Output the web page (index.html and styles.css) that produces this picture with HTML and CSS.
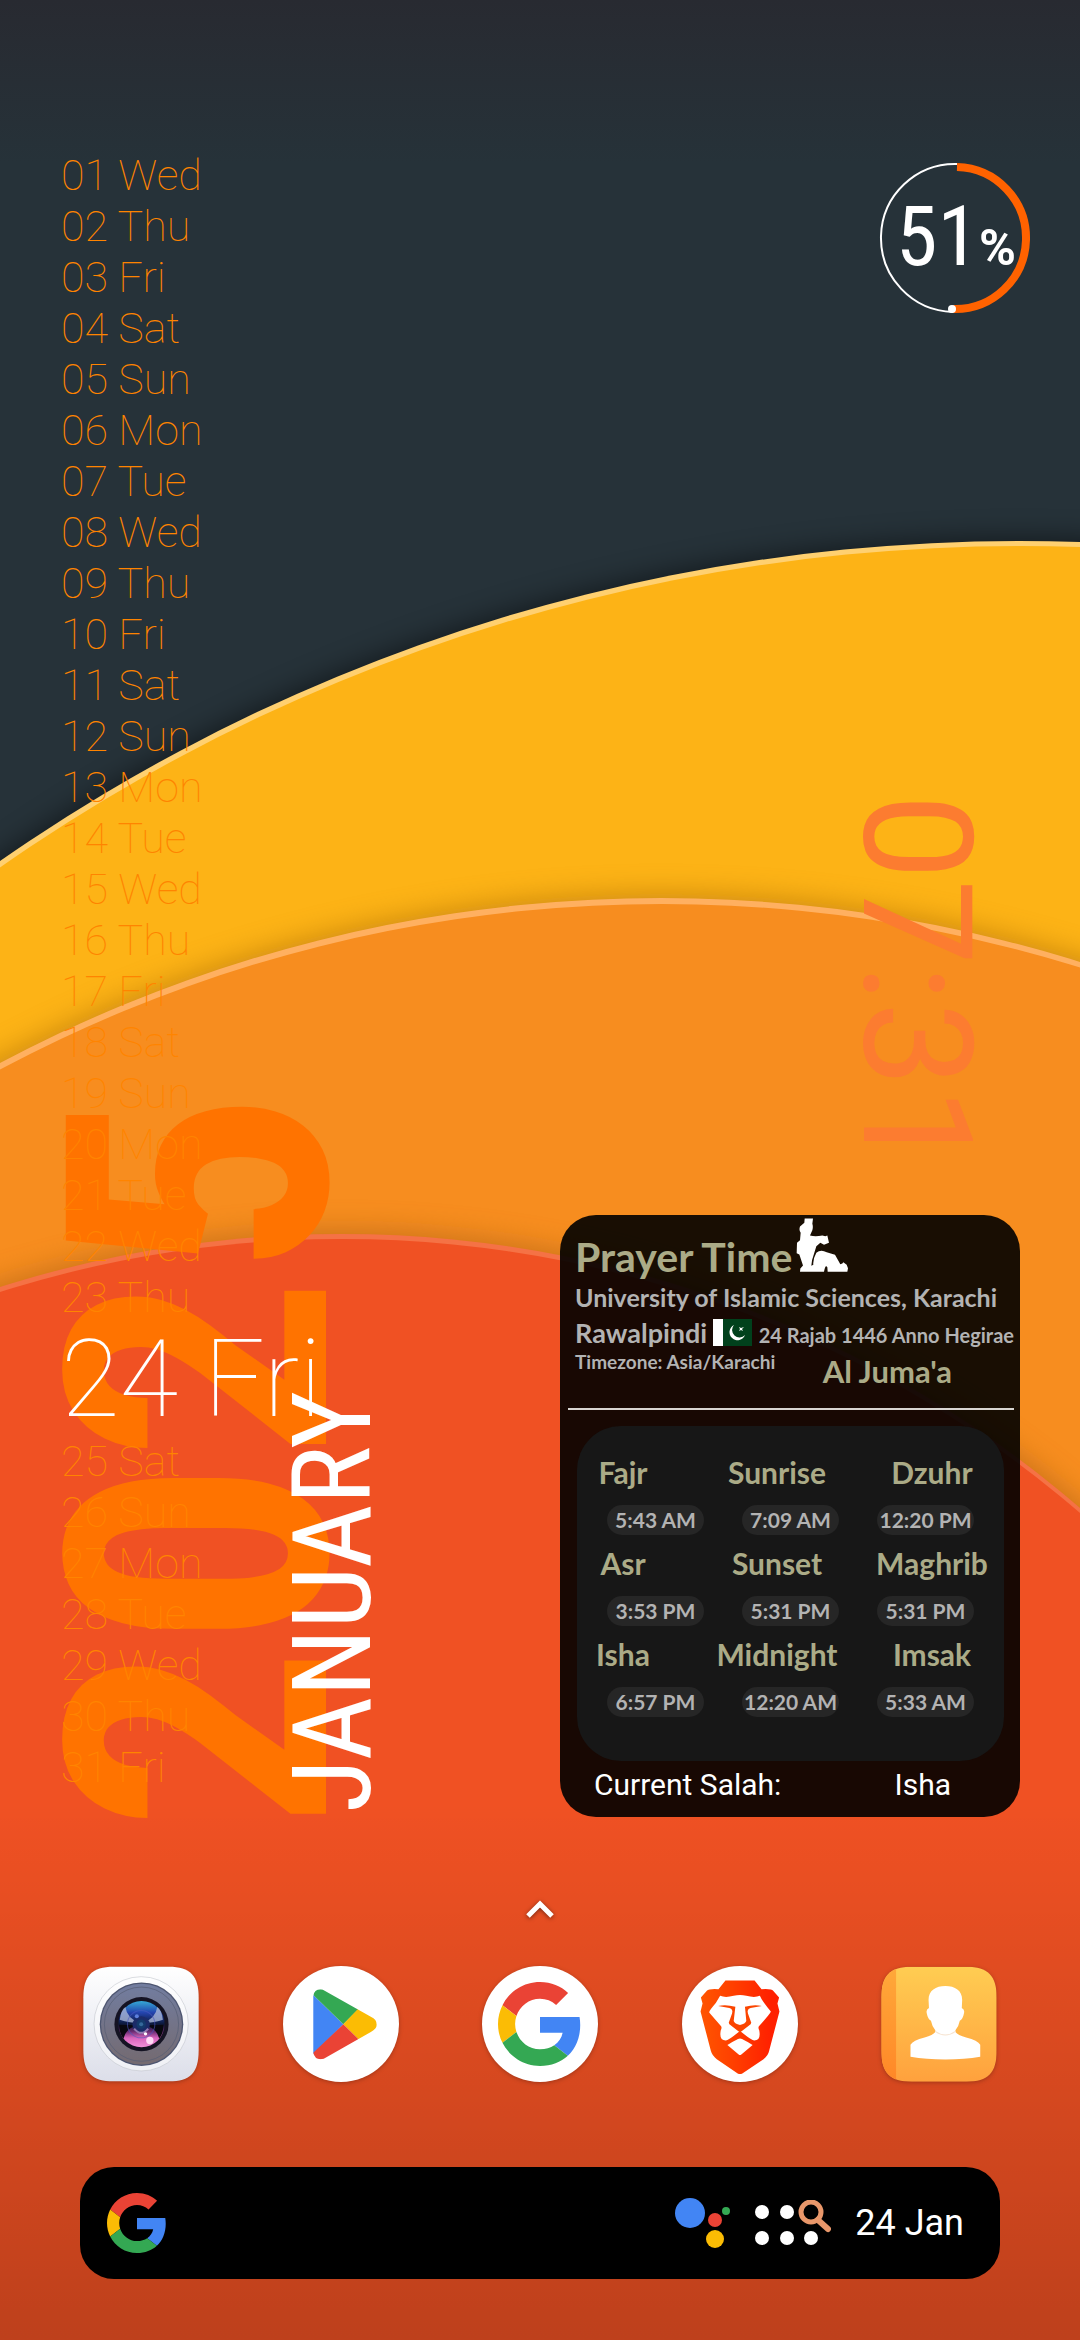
FILE: index.html
```html
<!DOCTYPE html>
<html lang="en">
<head>
<meta charset="utf-8">
<meta name="viewport" content="width=device-width, initial-scale=1">
<title>Home screen</title>
<link rel="stylesheet" href="styles.css">
</head>
<body>
<svg class="wallpaper" viewBox="0 0 1080 2340" preserveAspectRatio="xMidYMid slice" aria-hidden="true">
  <defs>
    <linearGradient id="night" x1="0" y1="0" x2="0" y2="1"><stop offset="0" stop-color="#282a31"/><stop offset=".07" stop-color="#263239"/><stop offset="1" stop-color="#263239"/></linearGradient>
    <linearGradient id="dusk" x1="0" y1="0" x2="0" y2="1"><stop offset=".77" stop-color="#000" stop-opacity="0"/><stop offset="1" stop-color="#000" stop-opacity=".21"/></linearGradient>
    <filter id="soft" x="-10%" y="-10%" width="120%" height="120%"><feGaussianBlur stdDeviation="14"/></filter>
  </defs>
  <rect width="1080" height="2340" fill="url(#night)"/>
  <circle cx="1019" cy="2323" r="1784" fill="#000" opacity=".5" filter="url(#soft)"/>
  <circle cx="1019" cy="2323" r="1782" fill="#ffd070"/>
  <circle cx="1021" cy="2328" r="1782" fill="#fdb316"/>
  <circle cx="661" cy="2304" r="1410" fill="#a0620a" opacity=".5" filter="url(#soft)"/>
  <circle cx="661" cy="2304" r="1406" fill="#ffb060"/>
  <circle cx="662" cy="2310" r="1406" fill="#f78d1f"/>
  <circle cx="342" cy="2365" r="1135" fill="#a05a14" opacity=".5" filter="url(#soft)"/>
  <circle cx="342" cy="2365" r="1131" fill="#f57245"/>
  <circle cx="342" cy="2370" r="1131" fill="#f05123"/>
  <rect width="1080" height="2340" fill="url(#dusk)"/>
</svg>

<main class="home">
  <section class="calendar" aria-label="Calendar">
    <div class="year">2025</div>
    <ol class="days">
      <li>01 Wed</li><li>02 Thu</li><li>03 Fri</li><li>04 Sat</li><li>05 Sun</li><li>06 Mon</li><li>07 Tue</li><li>08 Wed</li><li>09 Thu</li><li>10 Fri</li><li>11 Sat</li><li>12 Sun</li><li>13 Mon</li><li>14 Tue</li><li>15 Wed</li><li>16 Thu</li><li>17 Fri</li><li>18 Sat</li><li>19 Sun</li><li>20 Mon</li><li>21 Tue</li><li>22 Wed</li><li>23 Thu</li>
      <li class="today">24 Fri</li>
      <li>25 Sat</li><li>26 Sun</li><li>27 Mon</li><li>28 Tue</li><li>29 Wed</li><li>30 Thu</li><li>31 Fri</li>
    </ol>
    <div class="month">JANUARY</div>
  </section>

  <section class="widgets">
    <div class="battery">
      <svg class="ring" viewBox="0 0 150 150" aria-hidden="true">
        <path d="M75 1A74 74 0 0 0 71 149" fill="none" stroke="#fff" stroke-width="2"/>
        <path d="M75 4A71 71 0 1 1 71 146" fill="none" stroke="#ff6200" stroke-width="8"/>
        <circle cx="70" cy="146" r="4" fill="#fff"/>
      </svg>
      <div class="level">51<span class="percent">%</span></div>
    </div>
    <time class="clock">07:31</time>

    <article class="prayer">
      <header class="prayer-head">
        <h1 class="title">Prayer Time</h1>
        <svg class="figure" viewBox="734 56 156 164" aria-hidden="true"><path fill="#fff" d="M760 57H785L783 73Q786 82 783 92L776 108Q792 112 813 108L822 110L828 108L833 130L818 136L807 130L795 140L789 160Q781 181 780 199L786 196Q784 180 795 160Q808 148 826 158L851 166L867 194L873 192L876 188L886 196L890 206L888 217H829L828 203Q822 193 818 217H746L747 207L755 198L744 165L736 161L737 130L746 122L748 100Q742 92 746 81L759 70Z"/></svg>
      </header>
      <p class="school">University of Islamic Sciences, Karachi</p>
      <div class="place">
        <span class="city">Rawalpindi</span>
        <svg class="flag" viewBox="0 0 39 27" role="img" aria-label="Pakistan"><rect width="39" height="27" fill="#01411c"/><rect width="10" height="27" fill="#fff"/><path fill="#fff" d="M21 6A8 8 0 1 0 32 16A7 7 0 1 1 21 6Z"/><path fill="#fff" d="M26 8L28 9L31 8L29 10L30 12L28 11L26 12L27 10Z"/></svg>
        <span class="hijri">24 Rajab 1446 Anno Hegirae</span>
      </div>
      <div class="zone">
        <span class="timezone">Timezone: Asia/Karachi</span>
        <span class="weekday">Al Juma'a</span>
      </div>
      <hr class="rule">
      <div class="times">
        <div class="names"><span>Fajr</span><span>Sunrise</span><span>Dzuhr</span></div>
        <div class="pills"><span>5:43 AM</span><span>7:09 AM</span><span>12:20 PM</span></div>
        <div class="names"><span>Asr</span><span>Sunset</span><span>Maghrib</span></div>
        <div class="pills"><span>3:53 PM</span><span>5:31 PM</span><span>5:31 PM</span></div>
        <div class="names"><span>Isha</span><span>Midnight</span><span>Imsak</span></div>
        <div class="pills"><span>6:57 PM</span><span>12:20 AM</span><span>5:33 AM</span></div>
      </div>
      <footer class="current"><span>Current Salah:</span><span class="salah">Isha</span></footer>
    </article>
  </section>
</main>

<button class="drawer" aria-label="All apps"><svg width="30" height="20" viewBox="0 0 30 20"><path d="M3 16L15 4L27 16" fill="none" stroke="#fff" stroke-width="5"/></svg></button>

<nav class="dock" aria-label="Favourites">
  <a href="#camera" aria-label="Camera" class="app"><svg viewBox="69 261 347 347">
    <defs>
      <linearGradient id="cb" x1="0" y1="0" x2="0" y2="1"><stop offset="0" stop-color="#fff"/><stop offset="1" stop-color="#dcdee9"/></linearGradient>
      <linearGradient id="cr" x1="0" y1="0" x2="0" y2="1"><stop offset="0" stop-color="#727da0"/><stop offset="1" stop-color="#746a70"/></linearGradient>
      <linearGradient id="cl" x1="0" y1="0" x2="0" y2="1"><stop offset="0" stop-color="#35a8d6"/><stop offset=".25" stop-color="#2444ae"/><stop offset=".5" stop-color="#0b1838"/><stop offset=".66" stop-color="#6a2c74"/><stop offset=".8" stop-color="#d965bd"/><stop offset="1" stop-color="#f08fd8"/></linearGradient>
    </defs>
    <path d="M70 355C70 290 96 263 160 263H326C390 263 415 290 415 355V513C415 580 390 606 326 606H160C96 606 70 580 70 513Z" fill="url(#cb)"/>
    <circle cx="243" cy="434" r="141" fill="#fff" fill-opacity=".5" stroke="#b9bcc4" stroke-width="1.5"/>
    <circle cx="244" cy="435" r="125" fill="#4d5570"/><circle cx="244" cy="435" r="121" fill="url(#cr)"/>
    <circle cx="244" cy="435" r="111" fill="none" stroke="#555d74" stroke-width="2"/>
    <circle cx="244" cy="435" r="81" fill="#151323"/>
    <circle cx="244" cy="435" r="69" fill="url(#cl)"/>
    <path d="M179 422Q183 392 196 384Q200 418 240 432Q200 430 179 422M308 422Q304 392 291 384Q287 418 247 432Q287 430 308 422" fill="#a9b6d6" opacity=".8"/>
    <path d="M177 437Q178 465 190 478Q196 450 230 438M310 437Q309 465 297 478Q291 450 257 438" fill="#08080f"/>
    <circle cx="243" cy="435" r="41" fill="none" stroke="#4b58c0" stroke-width="3" opacity=".6"/>
    <circle cx="243" cy="437" r="26" fill="#1b2b68"/><circle cx="243" cy="435" r="14" fill="#143a6c"/><circle cx="243" cy="435" r="6" fill="#35689a"/>
    <path d="M222 448Q243 474 264 448" fill="none" stroke="#c59ad0" stroke-width="6" opacity=".7"/>
    <circle cx="269" cy="484" r="11" fill="#ffd9f6"/><circle cx="256" cy="464" r="5" fill="#fff"/><circle cx="230" cy="411" r="6" fill="#5e80dd"/>
  </svg></a>
  <a href="#play" aria-label="Play Store" class="app"><svg viewBox="665 259 350 350">
    <circle cx="840" cy="434" r="175" fill="#fff"/>
    <clipPath id="pt"><path d="M756 350Q760 326 784 330L930 412Q948 420 948 436Q948 448 930 458L788 539Q762 546 756 520Z"/></clipPath>
    <g clip-path="url(#pt)"><path fill="#4285f4" d="M750 340L847 435L750 532Z"/><path fill="#34a853" d="M750 320H830L893 389L847 435L750 340Z"/><path fill="#fbbc04" d="M891 389L960 400V470L893 480L847 435Z"/><path fill="#ea4335" d="M847 435L893 480L830 550H750V527Z"/></g>
  </svg></a>
  <a href="#google" aria-label="Google" class="app"><svg viewBox="0 0 116 116">
    <circle cx="58" cy="58" r="58" fill="#fff"/>
    <svg x="16" y="16" width="84" height="84" viewBox="0 0 48 48"><use href="#g"/></svg>
  </svg></a>
  <a href="#brave" aria-label="Brave" class="app"><svg viewBox="359 259 350 350">
    <defs><linearGradient id="br"><stop offset="0" stop-color="#ff5500"/><stop offset=".4" stop-color="#ff4000"/><stop offset=".9" stop-color="#ff2000"/></linearGradient></defs>
    <circle cx="534" cy="434" r="175" fill="#fff"/>
    <path fill="url(#br)" d="M490 303H578L599 329Q630 327 634 334L652 354L647 372L653 396L622 515Q619 530 605 540L541 583Q534 587 527 583L464 540Q450 530 446 515L415 396L421 372L416 354L434 334Q440 327 469 329Z"/>
    <path fill="#fff" d="M474 349Q490 356 515 349Q534 344 553 349Q578 356 594 349Q601 366 627 396Q627 400 591 441Q588 446 592 453Q598 484 577 484Q570 484 538 458Q534 455 530 458Q498 484 491 484Q470 484 476 453Q480 446 477 441L441 399Q441 394 461 371Z"/>
    <path fill="#fb4500" d="M468 380Q490 374 520 382L515 425Q518 434 534 437Q550 434 553 425L549 382Q578 374 600 380L566 386Q554 390 558 402L568 430L566 435L534 460L502 435L500 430L510 402Q514 390 502 386Z"/>
    <path fill="#fff" d="M496 497Q510 488 528 479Q534 476 540 479Q558 488 572 497L538 526Q534 529 530 526Z"/>
  </svg></a>
  <a href="#contacts" aria-label="Contacts" class="app"><svg viewBox="961 261 346 346">
    <defs><linearGradient id="co" x1="0" y1="0" x2="0" y2="1"><stop offset="0" stop-color="#ffcd52"/><stop offset="1" stop-color="#ffa13d"/></linearGradient>
    <linearGradient id="cs" x1="0" y1="0" x2="0" y2="1"><stop offset="0" stop-color="#ffa93a"/><stop offset="1" stop-color="#ff8727"/></linearGradient>
    <clipPath id="cc"><path d="M962 355C962 290 988 263 1052 263H1216C1280 263 1306 290 1306 355V513C1306 580 1280 606 1216 606H1052C988 606 962 580 962 513Z"/></clipPath></defs>
    <g clip-path="url(#cc)"><rect x="961" y="261" width="346" height="346" fill="url(#co)"/><rect x="961" y="261" width="45" height="346" fill="url(#cs)"/></g>
    <path fill="#fff" d="M1153 321C1183 321 1205 336 1203 365L1202 386Q1212 390 1208 404Q1205 420 1196 424Q1193 440 1183 453V458Q1190 468 1215 474Q1250 482 1257 496V532Q1210 540 1153 540Q1096 540 1049 532V496Q1056 482 1091 474Q1116 468 1123 458V453Q1113 440 1110 424Q1101 420 1098 404Q1094 390 1104 386L1103 365C1101 336 1123 321 1153 321Z"/>
    <path d="M1123 456Q1153 478 1183 456" fill="none" stroke="#f6e3d0" stroke-width="3"/>
  </svg></a>
</nav>

<form class="search" role="search">
  <button type="button" class="g-button" aria-label="Google search"><svg width="70" height="70" viewBox="0 0 48 48">
    <g id="g"><path fill="#EA4335" d="M24 9.5c3.54 0 6.71 1.22 9.21 3.6l6.85-6.85C35.9 2.38 30.47 0 24 0 14.62 0 6.51 5.38 2.56 13.22l7.98 6.19C12.43 13.72 17.74 9.5 24 9.5z"/><path fill="#4285F4" d="M46.98 24.55c0-1.57-.15-3.09-.38-4.55H24v9.02h12.94c-.58 2.96-2.26 5.48-4.78 7.18l7.73 6c4.51-4.18 7.09-10.36 7.09-17.65z"/><path fill="#FBBC05" d="M10.53 28.59c-.48-1.45-.76-2.99-.76-4.59s.27-3.14.76-4.59l-7.98-6.19C.92 16.46 0 20.12 0 24c0 3.88.92 7.54 2.56 10.78l7.97-6.19z"/><path fill="#34A853" d="M24 48c6.48 0 11.93-2.13 15.89-5.81l-7.73-6c-2.15 1.45-4.92 2.3-8.16 2.3-6.26 0-11.57-4.22-13.47-9.91l-7.98 6.19C6.51 42.62 14.62 48 24 48z"/></g>
  </svg></button>
  <input class="query" type="search" aria-label="Search">
  <button type="button" class="tool" aria-label="Assistant"><svg width="56" height="50" viewBox="0 0 56 50"><circle cx="15" cy="15" r="15" fill="#4285f4"/><circle cx="40" cy="22" r="7" fill="#ea4335"/><circle cx="40" cy="41" r="9" fill="#fbbc04"/><circle cx="51" cy="13" r="4" fill="#34a853"/></svg></button>
  <button type="button" class="tool" aria-label="Search apps"><svg width="76" height="46" viewBox="0 0 76 46"><g fill="#fff"><circle cx="7" cy="12" r="7"/><circle cx="32" cy="12" r="7"/><circle cx="7" cy="38" r="7"/><circle cx="32" cy="38" r="7"/><circle cx="56" cy="38" r="7"/></g><circle cx="56" cy="12" r="10" fill="#000" stroke="#e9976a" stroke-width="5"/><path d="M63 20L73 29" stroke="#e9976a" stroke-width="6" stroke-linecap="round"/></svg></button>
  <time class="date">24 Jan</time>
</form>
</body>
</html>
```
FILE: styles.css
```css
* { box-sizing: border-box; }

body {
  margin: 0;
  min-height: 100vh;
  position: relative;
  display: flex;
  flex-direction: column;
  overflow-x: hidden;
  font-family: Roboto, "Liberation Sans", sans-serif;
  color: #fff;
  background: #263239;
}

.wallpaper {
  position: absolute;
  inset: 0;
  z-index: -1;
  width: 100%;
  height: 100%;
}

button { border: 0; padding: 0; background: none; }

.home {
  display: grid;
  grid-template-columns: 1fr auto;
  padding: 150px 60px 0;
}

/* Calendar: year, day list and month share one grid cell */
.calendar { display: grid; justify-items: start; }
.calendar > * { grid-area: 1 / 1; }

.days {
  z-index: 1;
  margin: 0;
  padding: 0 0 0 1px;
  list-style: none;
  font-size: 43px;
  font-weight: 100;
  line-height: 51px;
  color: #ff8400;
  white-space: nowrap;
}
.today { font-size: 107px; line-height: 113px; color: #fff; }

.year, .month {
  align-self: end;
  writing-mode: vertical-rl;
  transform: rotate(180deg);
  line-height: 1;
}
.year {
  margin: 0 0 -14px -42px;
  font-family: "Roboto Condensed", Roboto, sans-serif;
  font-size: 366px;
  font-weight: 700;
  color: #ff7300;
}
.month {
  z-index: 2;
  margin: 0 0 4px 218px;
  font-family: "Roboto Condensed", Roboto, sans-serif;
  font-size: 110px;
}

.widgets {
  display: flex;
  flex-direction: column;
  align-items: flex-end;
}

.battery {
  display: grid;
  width: 150px;
  height: 150px;
  margin: 13px -12px 0 0;
  align-items: center;
}
.battery > * { grid-area: 1 / 1; }
.ring { overflow: visible; }
.level {
  padding: 8px 0 0 14px;
  font-family: "Roboto Condensed", Roboto, sans-serif;
  font-size: 84px;
  line-height: 96px;
  white-space: nowrap;
}
.percent { font-family: Roboto, sans-serif; font-size: 50px; font-weight: 700; }

.clock {
  margin: 481px 28px 0 0;
  writing-mode: vertical-rl;
  font-size: 152px;
  line-height: 152px;
  color: #fc7c30;
}

/* Prayer card */
.prayer {
  width: 460px;
  margin-top: 42px;
  border-radius: 36px;
  background: rgba(0, 0, 0, .9);
  font-family: Lato, sans-serif;
  font-weight: 700;
  color: #b3b3b3;
  white-space: nowrap;
}
.prayer-head { display: flex; height: 65px; padding: 3px 15px 0; }
.title {
  margin: 14px 4px 0 0;
  font-size: 41px;
  line-height: 50px;
  color: #abab87;
}
.figure { width: 52px; height: 55px; }
.school { margin: 0 15px; font-size: 25px; line-height: 34px; }
.place { display: flex; align-items: center; padding: 0 6px 0 15px; }
.city { font-size: 27px; line-height: 34px; }
.flag { width: 39px; height: 27px; margin-left: 6px; }
.hijri { margin-left: auto; font-size: 20px; line-height: 34px; padding-top: 4px; }
.zone {
  display: flex;
  justify-content: space-between;
  height: 35px;
  padding: 0 68px 0 15px;
}
.timezone { font-size: 19px; line-height: 20px; }
.weekday { font-size: 31px; line-height: 38px; color: #abab87; }
.rule {
  height: 2px;
  margin: 21px 6px 0 8px;
  border: 0;
  background: #d8d5d2;
}

.times {
  margin: 16px 16px 0 17px;
  padding: 28px 0 34px;
  border-radius: 44px;
  background: #171717;
}
.names {
  display: grid;
  grid-template-columns: 92px 216px 94px;
  height: 51px;
  font-size: 30px;
  line-height: 36px;
  color: #abab87;
}
.names span { display: flex; justify-content: center; }
.pills {
  display: grid;
  grid-template-columns: repeat(3, 97px);
  gap: 38px;
  padding: 0 0 10px 30px;
}
.pills span {
  border-radius: 15px;
  background: #262626;
  font-size: 21px;
  line-height: 30px;
  text-align: center;
}

.current {
  display: flex;
  justify-content: space-between;
  padding: 7px 69px 15px 34px;
  font: 400 30px/34px Roboto, sans-serif;
  color: #fff;
}

.drawer {
  align-self: center;
  height: 20px;
  margin-top: 83px;
  filter: drop-shadow(0 1px 2px rgba(0, 0, 0, .5));
}
.drawer svg { display: block; }

.dock {
  display: flex;
  justify-content: space-between;
  padding: 46px 83px 0;
}
.app { width: 116px; height: 116px; filter: drop-shadow(0 1px 2px rgba(0, 0, 0, .25)); }
.app svg { display: block; }

.search {
  display: flex;
  align-items: center;
  height: 112px;
  margin: 85px 80px 0;
  padding: 0 36px 0 27px;
  border-radius: 34px;
  background: #000;
}
.g-button svg { display: block; width: 60px; height: 60px; }
.query {
  flex: 1;
  min-width: 0;
  height: 60px;
  border: 0;
  background: none;
  color: #fff;
}
.tool { margin-right: 24px; }
.tool svg { display: block; }
.date { font-size: 36px; line-height: 44px; }
```
